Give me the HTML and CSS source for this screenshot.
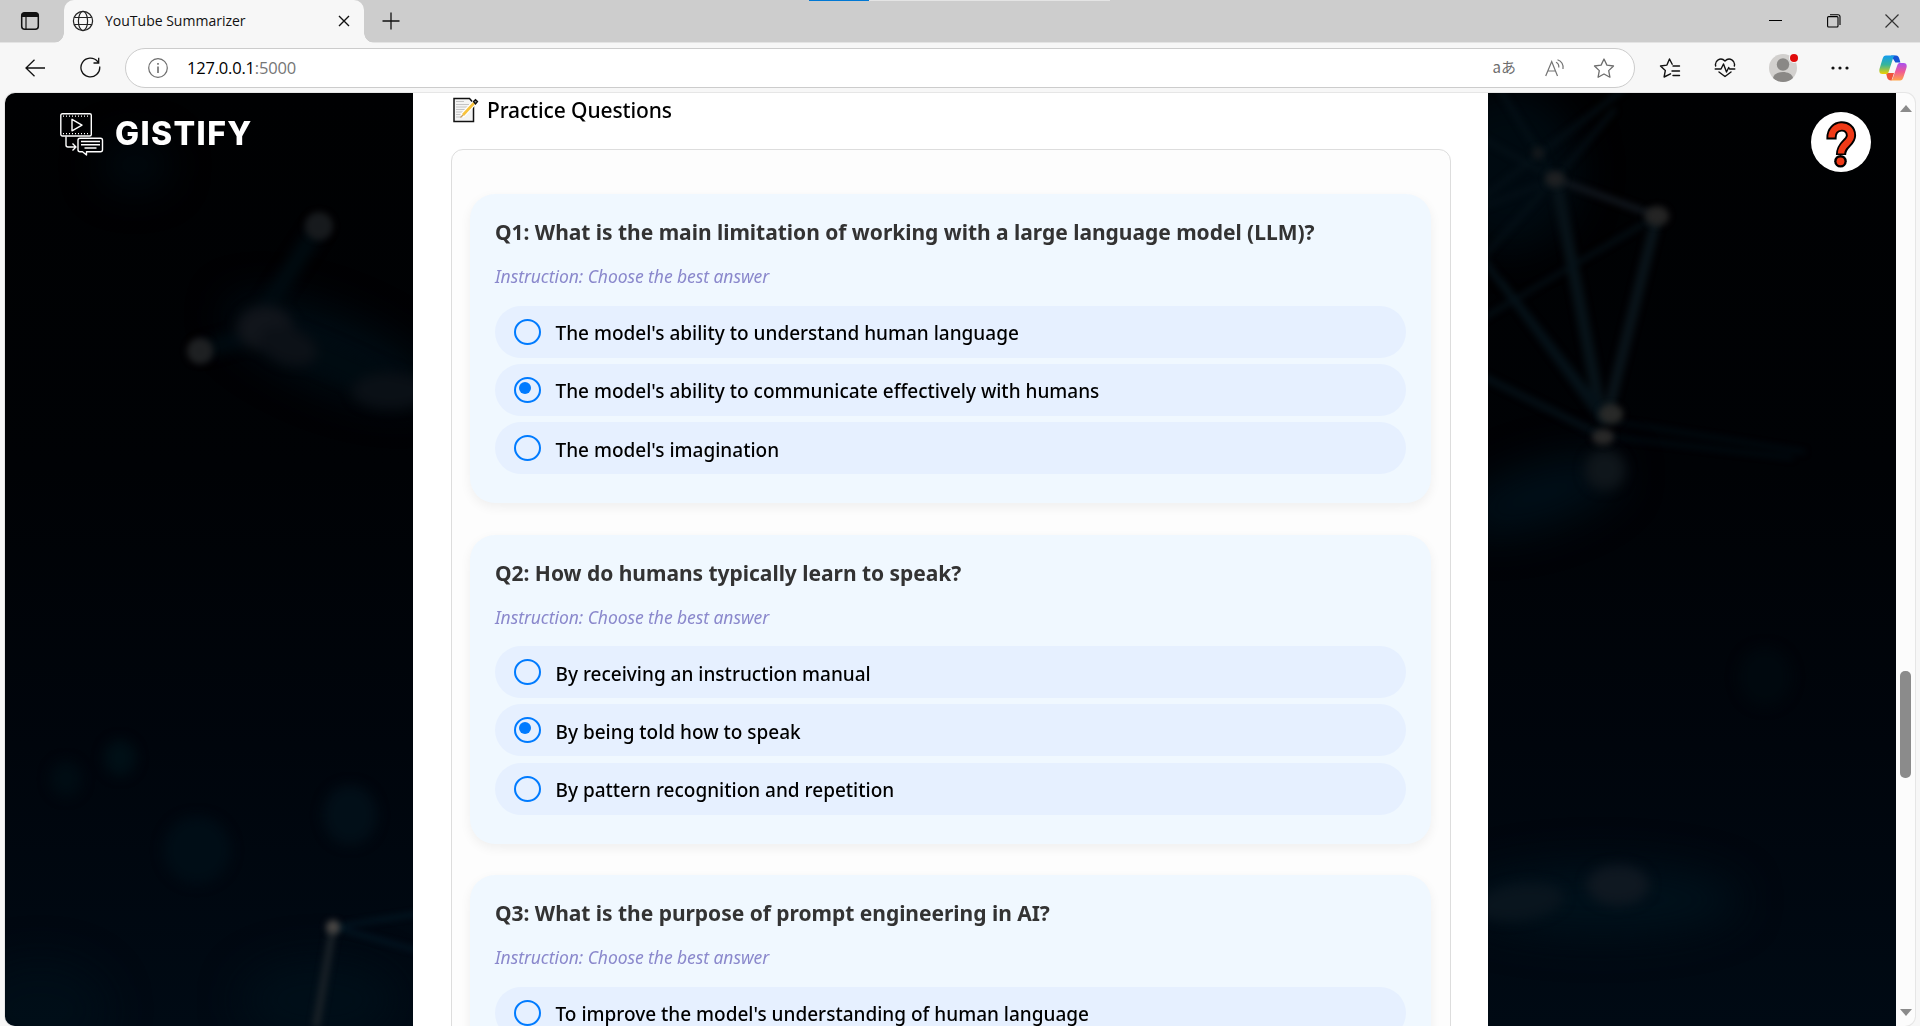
FILE: index.html
```html
<!DOCTYPE html>
<html lang="en">
<head>
<meta charset="utf-8">
<title>YouTube Summarizer</title>
<link rel="stylesheet" href="styles.css">
</head>
<body>
<div class="browser">
  <header class="tabbar">
    <div class="loading"></div>
    <svg class="tab-actions" width="20" height="20" viewBox="0 0 20 20"><rect x="1.7" y="1.7" width="16.6" height="16.6" rx="3" fill="none" stroke="#111" stroke-width="1.5"/><path d="M1.5 6V4.5a3 3 0 0 1 3-3h11a3 3 0 0 1 3 3V6z" fill="#111"/><path d="M6 6v12" stroke="#111" stroke-width="1.2"/></svg>
    <div class="tab">
      <svg width="22" height="22" viewBox="0 0 22 22" fill="none" stroke="#222" stroke-width="1.2"><circle cx="11" cy="11" r="9.6"/><ellipse cx="11" cy="11" rx="4.6" ry="9.6"/><path d="M2.3 7.5h17.4M2.3 14.5h17.4"/></svg>
      <span class="tab-title">YouTube Summarizer</span>
      <svg class="tab-close" width="12" height="12" viewBox="0 0 12 12" stroke="#111" stroke-width="1.4"><path d="M1 1l10 10M11 1L1 11"/></svg>
    </div>
    <svg class="new-tab" width="18" height="18" viewBox="0 0 18 18" stroke="#111" stroke-width="1.3"><path d="M9 .5v17M.5 9h17"/></svg>
    <div class="window-controls">
      <svg width="14" height="14" viewBox="0 0 14 14" stroke="#000"><path d="M0 6.5h13"/></svg>
      <svg width="14" height="14" viewBox="0 0 14 14" fill="none" stroke="#000" stroke-width="1.1"><rect x=".6" y="2.6" width="10.4" height="10.4" rx="1"/><path d="M3 .7h8a2 2 0 0 1 2 2v8.200"/></svg>
      <svg width="14" height="14" viewBox="0 0 14 14" stroke="#333" stroke-width="1.2"><path d="M.5.5l13 13M13.500.5l-13 13"/></svg>
    </div>
  </header>
  <div class="toolbar">
    <svg class="back" width="20" height="18" viewBox="0 0 20 18" fill="none" stroke="#111" stroke-width="1.3"><path d="M9.500.8L1 9l8.500 8.200M1 9h19"/></svg>
    <svg class="reload" width="21" height="21" viewBox="0 0 21 21" fill="none" stroke="#111" stroke-width="1.3"><path d="M19.700 9.500A9.400 9.400 0 1 1 17.600 4.500l.9 1.200M18.700.8v5.200h-5.200"/></svg>
    <div class="address">
      <svg width="20" height="20" viewBox="0 0 20 20" fill="none" stroke="#6d6d6d" stroke-width="1.2"><circle cx="10" cy="10" r="9.300"/><path d="M10 8.500v6.500M10 5v1.800" stroke-width="1.600"/></svg>
      <span class="url">127.0.0.1<span class="port">:5000</span></span>
      <span class="translate">aあ</span>
      <svg class="read" width="20" height="18" viewBox="0 0 20 18" fill="none" stroke="#737373" stroke-width="1.200"><path d="M.7 17L6.700 2.500 12.500 17M2.800 12h7.700M11 3.200c2 1 3 3.200 2.800 5.300M12.500.8c4 1.500 6 5.200 5.500 9.200"/></svg>
      <svg class="star" width="22" height="20" viewBox="0 0 22 20" fill="none" stroke="#6d6d6d" stroke-width="1.300" stroke-linejoin="round"><path d="M11 1l2.900 6.100 6.600.9-4.800 4.600 1.200 6.600L11 16l-5.900 3.200 1.200-6.600L1.500 8l6.600-.9z"/></svg>
    </div>
    <div class="actions">
      <svg width="22" height="20" viewBox="0 0 22 20" fill="none" stroke="#111" stroke-width="1.400" stroke-linejoin="round" stroke-linecap="round"><path d="M11.500 15.800L5.100 19l1.200-6.400L1.500 8l6.400-.9L10.500 1l2.700 5.200M14 8h6.500M13 13h7.500M14 17.500h6.500"/></svg>
      <svg width="22" height="20" viewBox="0 0 22 20" fill="none" stroke="#111" stroke-width="1.400" stroke-linejoin="round" stroke-linecap="round"><path d="M1.700 8C.3 3 6.500-1.700 11 3c4.500-4.700 10.700 0 9.300 5M1.200 11H7l2.500-5 3 8 2.200-4.500.8 1.500h5.300M5 14l6 4.500 6-4.500"/></svg>
      <div class="avatar">
        <svg width="28" height="28" viewBox="0 0 28 28"><circle cx="14" cy="14" r="14" fill="#d2d0ce"/><circle cx="14" cy="10.500" r="6.200" fill="#8a8886"/><path d="M4 24c1.500-8 18.500-8 20 0-5.500 5.300-14.500 5.300-20 0z" fill="#8a8886"/></svg>
        <i class="dot"></i>
      </div>
      <svg width="18" height="4" viewBox="0 0 18 4" fill="#111"><circle cx="2" cy="2" r="1.600"/><circle cx="9" cy="2" r="1.600"/><circle cx="16" cy="2" r="1.600"/></svg>
      <svg width="28" height="26" viewBox="0 0 28 26">
        <defs>
          <linearGradient id="cool" x1="0" y1="0" x2="0" y2="1"><stop offset="0" stop-color="#139cf0"/><stop offset=".5" stop-color="#37b59b"/><stop offset="1" stop-color="#f0d000"/></linearGradient>
          <linearGradient id="warm" x1="0" y1="0" x2="0" y2="1"><stop offset="0" stop-color="#a84ff0"/><stop offset=".5" stop-color="#f05a94"/><stop offset="1" stop-color="#ffa54a"/></linearGradient>
        </defs>
        <path d="M12 .5h5c2 0 2.800 1.200 3.400 3.500l1 3.500h-5z" fill="#1553d6"/>
        <path d="M7 18h8l-2.500 7.500c-3 0-4-1.500-4.500-3.500z" fill="#f0523c"/>
        <path d="M7 .5h10c-2 0-2.600 1.500-3.200 3.500l-4 12.500c-.6 2-1.500 2.500-3 2.500H3.500C.5 19-.2 16.500.6 13.500L3.500 4C4.300 1.500 5.200.5 7 .5z" fill="url(#cool)"/>
        <path d="M21 25.500H11c2 0 2.600-1.500 3.200-3.500l4-11.500C18.800 8.500 19.700 8 21.200 8h3.300c3 0 3.700 2 2.900 5l-2.900 9.000c-.8 2.500-1.700 3.500-3.500 3.500z" fill="url(#warm)"/>
      </svg>
    </div>
  </div>

  <div class="viewport">
    <svg class="backdrop" width="1891" height="933" viewBox="5 93 1891 933" color-interpolation-filters="sRGB">
      <defs>
        <linearGradient id="night" x1="0" y1="0" x2="0" y2="1"><stop offset="0" stop-color="#000102"/><stop offset=".4" stop-color="#000205"/><stop offset=".7" stop-color="#00050c"/><stop offset="1" stop-color="#000a14"/></linearGradient>
        <filter id="soft2" x="-60%" y="-60%" width="220%" height="220%"><feGaussianBlur stdDeviation="3"/></filter>
        <filter id="soft3" filterUnits="userSpaceOnUse" x="0" y="80" width="1920" height="960"><feGaussianBlur stdDeviation="3"/></filter>
        <filter id="soft5" filterUnits="userSpaceOnUse" x="0" y="80" width="1920" height="960"><feGaussianBlur stdDeviation="6"/></filter>
        <filter id="soft20" filterUnits="userSpaceOnUse" x="-60" y="20" width="2040" height="1080"><feGaussianBlur stdDeviation="20"/></filter>
      </defs>
      <rect x="5" y="93" width="1891" height="933" fill="url(#night)"/>
      <g filter="url(#soft20)" fill="#00111b">
        <ellipse cx="1510" cy="170" rx="70" ry="80" opacity=".6"/>
        <ellipse cx="135" cy="165" rx="35" ry="25" opacity=".5"/>
        <ellipse cx="330" cy="350" rx="110" ry="35" transform="rotate(22 330 350)" opacity=".7"/>
        <ellipse cx="1540" cy="495" rx="85" ry="30" transform="rotate(-18 1540 495)" opacity=".9"/>
        <ellipse cx="1600" cy="900" rx="140" ry="35"/>
        <ellipse cx="320" cy="1000" rx="80" ry="40" opacity=".7"/>
        <ellipse cx="40" cy="1010" rx="70" ry="50" opacity=".5"/>
      </g>
      <g filter="url(#soft5)">
        <path d="M319 226L265 310M199 351l70-20" stroke="#000b11" stroke-width="16"/>
        <path d="M265 330l140 62" stroke="#000b11" stroke-width="30"/>
        <ellipse cx="265" cy="328" rx="28" ry="22" fill="#11151b"/>
        <ellipse cx="288" cy="346" rx="30" ry="18" transform="rotate(20 288 346)" fill="#0c1117"/>
        <ellipse cx="390" cy="391" rx="38" ry="18" fill="#0a1016"/>
        <ellipse cx="120" cy="758" rx="16" ry="18" fill="#000f16"/>
        <ellipse cx="66" cy="779" rx="16" ry="18" fill="#000c13"/>
        <ellipse cx="197" cy="850" rx="34" ry="34" fill="#000d16"/>
        <ellipse cx="350" cy="815" rx="27" ry="30" fill="#020f18"/>
        <ellipse cx="1605" cy="470" rx="20" ry="20" fill="#0f161b"/>
        <ellipse cx="1765" cy="677" rx="27" ry="30" fill="#00080e"/>
        <ellipse cx="1618" cy="885" rx="31" ry="20" fill="#0f1821"/>
        <ellipse cx="1520" cy="902" rx="44" ry="18" transform="rotate(-8 1520 902)" fill="#09151e"/>
      </g>
      <g filter="url(#soft3)" fill="none" stroke-width="4" stroke="#051118">
        <path d="M1555 179l102 37" stroke="#12181f" stroke-width="6"/>
        <path d="M1657 216l-50 200" stroke="#091319" stroke-width="11"/>
        <path d="M1556 180l46 240" stroke="#071218" stroke-width="12"/>
        <path d="M1500 90l55 89M1480 200l145-112M1480 137l75 42M1480 208l75-29M1480 260l75-81M1480 320l177-104M1555 179l60-70"/>
        <path d="M1480 255l125 170M1480 375l123 61M1500 280l110 140" stroke-width="6"/>
        <path d="M1605 420l200 32M1603 436l190 22" stroke="#000e16" stroke-width="3"/>
        <path d="M333 927l90-14M333 927l90 25" stroke="#041c29" stroke-width="3"/>
        <path d="M333 927l-17 100" stroke="#182026" stroke-width="8"/>
      </g>
      <g filter="url(#soft2)" fill="#1e2022">
        <circle cx="319" cy="226" r="14" fill="#171a1d"/>
        <ellipse cx="200" cy="351" rx="13" ry="13"/>
        <ellipse cx="333" cy="927" rx="7" ry="7" fill="#484644"/>
        <ellipse cx="1555" cy="179" rx="10" ry="8"/>
        <ellipse cx="1538" cy="153" rx="6" ry="6" fill="#14181b"/>
        <ellipse cx="1657" cy="216" rx="12" ry="10" fill="#242424"/>
        <ellipse cx="1611" cy="414" rx="12" ry="10" fill="#282928"/>
        <ellipse cx="1603" cy="437" rx="11" ry="8" fill="#282828"/>
      </g>
    </svg>

    <aside class="side left">
      <svg width="44" height="44" viewBox="0 0 44 44" fill="none" stroke="#fff" stroke-width="1.400" stroke-linejoin="round">
        <rect x=".8" y=".8" width="30.500" height="22.200" rx="1.500"/>
        <path d="M3 3.200h27M3 20.600h27" stroke-dasharray="1 2" stroke-width="1.300"/>
        <path d="M12 6.300v11.500l10-5.700z"/>
        <path d="M6 23.500v8.500q0 2 2 2h7M12.500 30.500l3.500 3.500-3.500 3.500"/>
        <path d="M20 25.200h20.500q2 0 2 2v9.500q0 2-2 2H26.500V42l-4-3.300H20q-2 0-2-2v-9.500q0-2 2-2z"/>
        <path d="M21 28.500h19M21 31.700h19M24.500 35h12"/>
      </svg>
      <span class="brand">GISTIFY</span>
    </aside>

    <main class="content">
      <h2 class="heading">
        <svg width="26" height="26" viewBox="0 0 26 26">
          <path d="M1 1.500h15.500l4 4.500v18.500H1z" fill="#f4f4f4" stroke="#111" stroke-width="1.500"/>
          <path d="M3 4.500h8M3 7.500h13M3 10h13M3 12.500h13M3 15h10M3 17.500h9M3 20h5" stroke="#c4c4c4" stroke-width="1.100"/>
          <path d="M22 5L9 19" stroke="#fff" stroke-width="5"/>
          <path d="M22 5L10 18" stroke="#f8c33c" stroke-width="2.600"/>
          <path d="M10 18l-2.500 2.500" stroke="#c9a060" stroke-width="1.300"/>
          <path d="M20.500 4.500l2-1.800 2 1.800-2 2.400z" fill="#888" stroke="#111" stroke-width="1.300"/>
        </svg>
        <span>Practice Questions</span>
      </h2>
      <div class="quiz">
        <section class="card">
          <h3 class="question">Q1: What is the main limitation of working with a large language model (LLM)?</h3>
          <p class="hint">Instruction: Choose the best answer</p>
          <ul class="options">
            <li class="option"><i class="radio"></i><span>The model's ability to understand human language</span></li>
            <li class="option"><i class="radio checked"></i><span>The model's ability to communicate effectively with humans</span></li>
            <li class="option"><i class="radio"></i><span>The model's imagination</span></li>
          </ul>
        </section>
        <section class="card">
          <h3 class="question">Q2: How do humans typically learn to speak?</h3>
          <p class="hint">Instruction: Choose the best answer</p>
          <ul class="options">
            <li class="option"><i class="radio"></i><span>By receiving an instruction manual</span></li>
            <li class="option"><i class="radio checked"></i><span>By being told how to speak</span></li>
            <li class="option"><i class="radio"></i><span>By pattern recognition and repetition</span></li>
          </ul>
        </section>
        <section class="card">
          <h3 class="question">Q3: What is the purpose of prompt engineering in AI?</h3>
          <p class="hint">Instruction: Choose the best answer</p>
          <ul class="options">
            <li class="option"><i class="radio"></i><span>To improve the model's understanding of human language</span></li>
          </ul>
        </section>
      </div>
    </main>

    <aside class="side right">
      <div class="help">
        <svg width="60" height="60" viewBox="0 0 60 60" fill="none">
          <path d="M20.500 27.500V26C20.500 11 40 11 40 23.500C40 31 30 32 30 43" stroke="#000" stroke-width="10.200"/>
          <circle cx="29.500" cy="49.300" r="6.300" fill="#000"/>
          <path d="M20.500 25.500C20.500 11.500 40 11 40 23.500C40 31 30 32 30 41.500" stroke="#f03a17" stroke-width="6.400"/>
          <circle cx="29.500" cy="49.300" r="3.900" fill="#f03a17"/>
        </svg>
      </div>
    </aside>

    <div class="scrollbar">
      <i class="arrow up"></i>
      <i class="thumb"></i>
      <i class="arrow down"></i>
    </div>
  </div>
</div>
</body>
</html>
```
FILE: styles.css
```css
* { box-sizing: border-box; }
body {
  margin: 0;
  overflow: hidden;
  font-family: "Noto Sans", "Noto Sans CJK JP", sans-serif;
  background: #f7f7f7;
}
svg { display: block; flex: none; }
.browser { width: 1920px; height: 1026px; display: flex; flex-direction: column; }

/* Tab strip */
.tabbar {
  position: relative;
  display: flex;
  height: 43px;
  background: #cdcdcd;
  border-bottom: 1px solid #e4e4e4;
}
.loading {
  position: absolute;
  left: 809px;
  top: 0;
  width: 301px;
  height: 1px;
  background: linear-gradient(90deg, #0078d4 60px, #e4e4e4 60px);
}
.tab-actions { margin: 11px 0 0 20px; }
.tab {
  position: relative;
  display: flex;
  align-items: center;
  width: 300px;
  height: 43px;
  margin-left: 24px;
  padding: 0 14px 1px 8px;
  background: #f7f7f7;
  border-radius: 10px 10px 0 0;
}
.tab::before, .tab::after {
  content: "";
  position: absolute;
  bottom: 0;
  width: 10px;
  height: 10px;
}
.tab::before { left: -10px; background: radial-gradient(circle at 0 0, transparent 9.500px, #f7f7f7 10px); }
.tab::after { right: -10px; background: radial-gradient(circle at 100% 0, transparent 9.500px, #f7f7f7 10px); }
.tab-title { margin-left: 11px; padding-bottom: 2px; font-family: "Open Sans", sans-serif; font-size: 14px; color: #111; }
.tab-close { margin-left: auto; }
.new-tab { margin: 12px 0 0 18px; }
.window-controls { display: flex; gap: 44px; margin: 14px 21px 0 auto; }

/* Toolbar */
.toolbar { display: flex; align-items: center; height: 50px; padding-bottom: 1px; background: #f7f7f7; }
.back { margin-left: 25px; }
.reload { margin-left: 35px; }
.address {
  display: flex;
  align-items: center;
  width: 1510px;
  height: 40px;
  margin-left: 24px;
  padding: 0 19px 0 22px;
  border: 1px solid #cccccc;
  border-radius: 20px;
  background: #fff;
}
.url { margin-left: 19px; font-family: "Open Sans", sans-serif; font-size: 16.500px; color: #000; letter-spacing: -0.200px; }
.port { color: #767676; }
.translate { margin-left: auto; font-size: 15px; color: #6d6d6d; font-family: "Noto Sans CJK JP", sans-serif; line-height: 20px; padding-bottom: 2px; }
.read { margin-left: 29px; }
.star { margin-left: 28px; }
.actions { display: flex; align-items: center; margin-left: 24px; }
.actions > :nth-child(2) { margin-left: 33px; }
.avatar { position: relative; margin-left: 33px; }
.dot {
  position: absolute;
  right: -1px;
  top: 0;
  width: 8px;
  height: 8px;
  border-radius: 50%;
  background: #e00b0b;
  box-shadow: 0 0 0 1px #f7f7f7;
}
.actions > :nth-child(4) { margin-left: 34px; }
.actions > :nth-child(5) { margin-left: 30px; }

/* Page area */
.viewport {
  position: relative;
  display: flex;
  width: 1910px;
  height: 933px;
  margin-left: 5px;
  border-radius: 10px;
  overflow: hidden;
  background: #fcfcfc;
  box-shadow: 0 0 0 1px #e6e6e6;
}
.backdrop { position: absolute; left: 0; top: 0; }
.side { position: relative; width: 408px; flex: none; display: flex; align-items: flex-start; }
.left { padding: 20px 0 0 55px; }
.brand {
  margin-left: 11px;
  font-family: Inter, sans-serif;
  font-weight: 800;
  font-size: 32px;
  line-height: 42px;
  letter-spacing: 1.400px;
  color: #fff;
}
.right { justify-content: flex-end; padding: 19px 25px 0 0; }
.help { width: 60px; height: 60px; border-radius: 50%; background: #fff; }

.content { position: relative; width: 1075px; height: 933px; flex: none; padding: 0 37px 0 38px; background: #fff; overflow: hidden; }
.heading {
  display: flex;
  align-items: center;
  gap: 8px;
  margin: 0;
  height: 56px;
  padding: 0 0 22px 2px;
  font-weight: 500;
  font-size: 21px;
  line-height: 34px;
  letter-spacing: -0.120px;
}
.quiz {
  height: 1100px;
  padding: 44px 19px 0 18px;
  border: 1px solid #dddddd;
  border-radius: 12px;
  background: #fdfdfd;
}
.card {
  height: 309px;
  margin-bottom: 31.500px;
  padding: 22px 25px 0;
  border-radius: 25px;
  background: #f0f8ff;
  box-shadow: 0 4px 12px rgba(0, 0, 0, 0.060);
}
.question { margin: 0; height: 33px; line-height: 33px; font-size: 21px; font-weight: 700; letter-spacing: -0.030px; color: #333; white-space: nowrap; }
.hint { margin: 13px 0 0; height: 28px; line-height: 29px; font-size: 17.500px; letter-spacing: -0.070px; font-style: italic; color: #8a88cc; white-space: nowrap; }
.options { display: flex; flex-direction: column; gap: 6.200px; margin: 15.700px 0 0; padding: 0; list-style: none; }
.option {
  display: flex;
  align-items: center;
  height: 52px;
  padding: 0 19px;
  gap: 14.500px;
  border-radius: 26px;
  background: #e6f0ff;
  font-size: 19px;
  font-weight: 500;
  white-space: nowrap;
}
.option span { padding-top: 3px; }
.radio { position: relative; width: 27px; height: 26px; border: 2px solid #007bff; border-radius: 50%; }
.checked::after {
  content: "";
  position: absolute;
  left: 3px;
  top: 3px;
  width: 12px;
  height: 12px;
  border-radius: 50%;
  background: #007bff;
}

/* Scrollbar */
.scrollbar { display: flex; flex-direction: column; align-items: center; width: 19px; padding: 12px 0 10px; }
.arrow { width: 0; height: 0; border: 6px solid transparent; }
.up { border-width: 0 6px 7px; border-bottom-color: #8b8b8b; }
.down { border-width: 7px 6px 0; border-top-color: #8b8b8b; margin-top: auto; }
.thumb { width: 11px; height: 107px; margin-top: 559px; border-radius: 5px; background: #8b8b8b; }
```
